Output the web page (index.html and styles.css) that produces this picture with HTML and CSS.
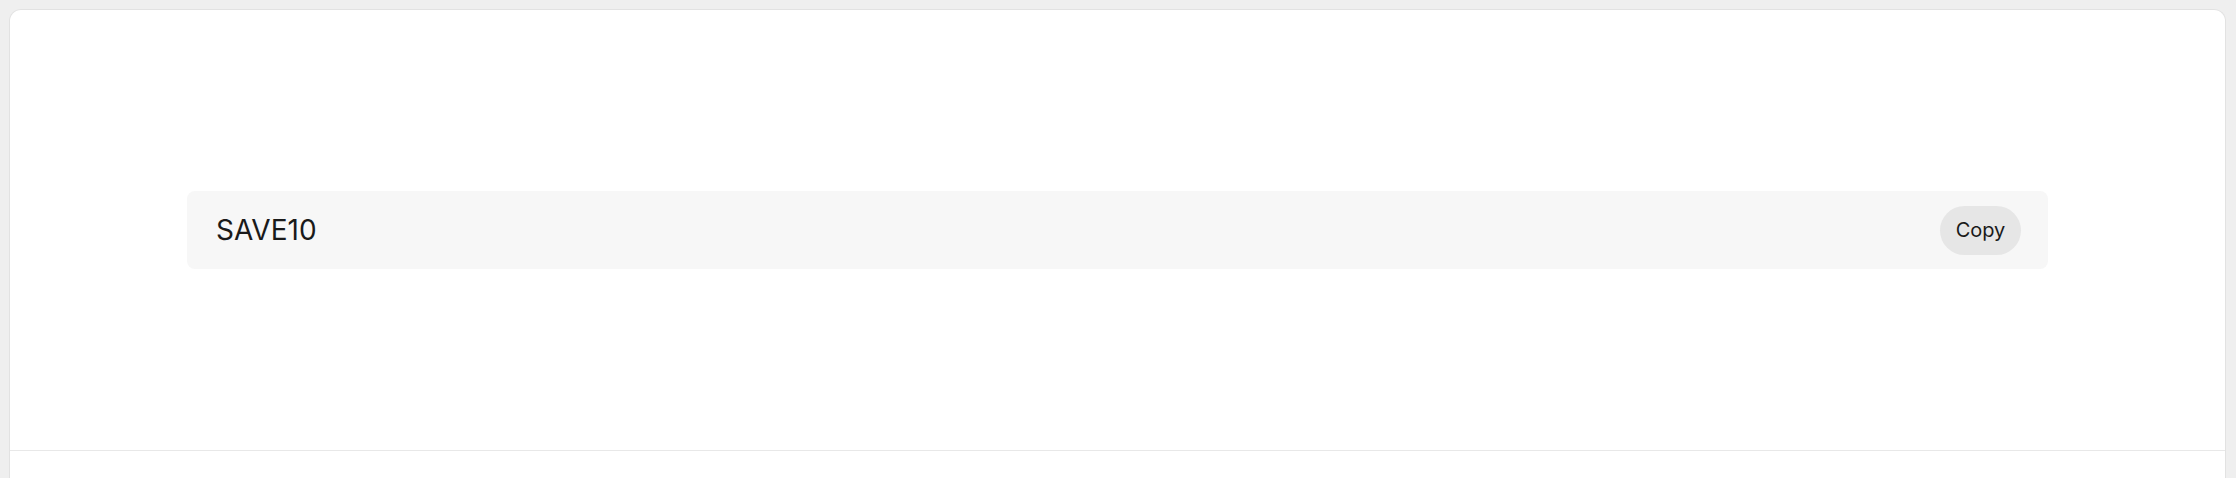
FILE: index.html
```html
<!DOCTYPE html>
<html>
<head>
<meta charset="utf-8">
<link rel="stylesheet" href="styles.css">
</head>
<body>
<div class="card">
  <div class="section">
    <div class="code-box">
      <span class="code">SAVE10</span>
      <button class="copy">Copy</button>
    </div>
  </div>
</div>
</body>
</html>
```
FILE: styles.css
```css
html, body {
  margin: 0;
  padding: 0;
  background: #efefef;
  font-family: Inter, "Noto Sans", sans-serif;
  color: #1a1a1a;
  overflow: hidden;
}
body {
  height: 478px;
  box-sizing: border-box;
  padding: 9px 10px 0 9px;
}
.card {
  background: #ffffff;
  border: 1px solid #e2e2e2;
  border-bottom: none;
  border-radius: 12px 12px 0 0;
  height: 469px;
  box-sizing: border-box;
}
.section {
  height: 440px;
  border-bottom: 1px solid #e8e8e8;
  display: flex;
  align-items: center;
  justify-content: center;
}
.code-box {
  width: 1861px;
  height: 78px;
  box-sizing: border-box;
  background: #f7f7f7;
  border-radius: 8px;
  display: flex;
  align-items: center;
  justify-content: space-between;
  padding: 0 27px 0 29px;
}
.code {
  font-size: 28px;
}
.copy {
  font-family: Inter, "Noto Sans", sans-serif;
  font-size: 20px;
  color: #1a1a1a;
  background: #e6e6e6;
  border: none;
  border-radius: 999px;
  height: 49px;
  width: 81px;
  padding: 0;
}
```
